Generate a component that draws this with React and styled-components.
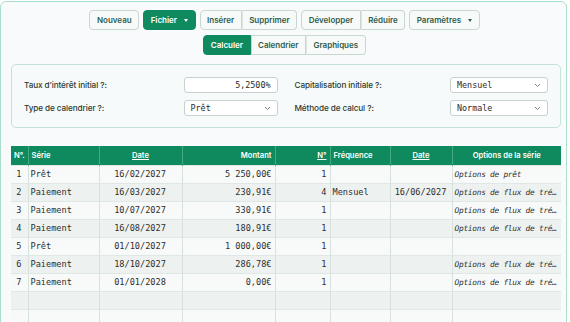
import React from "react";
import styled, { createGlobalStyle, css } from "styled-components";

const GREEN = "#0e8a5e";

const Global = createGlobalStyle`
  html, body { margin: 0; padding: 0; background: #ffffff; }
  body { font-family: Inter, "Noto Sans", sans-serif; }
  * { box-sizing: border-box; }
`;

const Shell = styled.div`
  margin: 1px 3px 0 0;
  height: 330px;
  border: 1px solid #a9e0cb;
  border-radius: 6px;
  background: #f8fafb;
  padding: 8px 7px 0 9px;
  display: flex;
  flex-direction: column;
`;

const Toolbar = styled.div`
  display: flex;
  flex-direction: column;
  align-items: center;
  gap: 5px;
`;

const ToolRow = styled.div`
  display: flex;
  gap: 4px;
  align-items: center;
`;

const Group = styled.div`
  display: flex;
`;

const Btn = styled.button`
  height: 20px;
  padding: 0 6.5px;
  font-family: Inter, "Noto Sans", sans-serif;
  font-size: 8px;
  font-weight: 600;
  color: #2f5d4c;
  background: #f7faf9;
  border: 1px solid #c9d7d1;
  border-radius: 4px;
  display: flex;
  align-items: center;
  gap: 7px;
  cursor: pointer;
  ${(p) =>
    p.$active &&
    css`
      background: ${GREEN};
      border-color: ${GREEN};
      color: #ffffff;
    `}
  ${Group} > & {
    border-radius: 0;
  }
  ${Group} > &:first-child {
    border-radius: 4px 0 0 4px;
  }
  ${Group} > &:last-child {
    border-radius: 0 4px 4px 0;
  }
  ${Group} > & + & {
    border-left: 1px solid #dde6e2;
  }
`;

const Caret = styled.span`
  width: 0;
  height: 0;
  border-left: 2.5px solid transparent;
  border-right: 2.5px solid transparent;
  border-top: 3px solid currentColor;
`;

const Settings = styled.div`
  margin: 9px 0 0 1px;
  width: 550px;
  height: 64px;
  border: 1px solid #c6e2d7;
  border-radius: 5px;
  background: #f7fafa;
  padding: 12px 12px 0 12px;
  display: grid;
  grid-template-columns: 1fr 1fr;
  column-gap: 17px;
  row-gap: 7px;
  align-content: start;
`;

const Field = styled.div`
  display: flex;
  align-items: center;
  justify-content: space-between;
  height: 16px;
`;

const Label = styled.span`
  font-size: 8.2px;
  letter-spacing: -0.1px;
  color: #2b3a34;
  font-weight: 500;
`;

const Control = styled.div`
  width: ${(p) => p.$w}px;
  height: 16px;
  border: 1px solid #c7d2ce;
  border-radius: 3px;
  background: #ffffff;
  display: flex;
  align-items: center;
  justify-content: ${(p) => (p.$right ? "flex-end" : "space-between")};
  padding: 0 6px 0 6px;
  font-family: "DejaVu Sans Mono", "Liberation Mono", monospace;
  font-size: 8.4px;
  color: #2b2b2b;
`;

const Chevron = () => (
  <svg width="7" height="5" viewBox="0 0 7 5" fill="none">
    <path d="M1 1l2.5 2.5L6 1" stroke="#6b7280" strokeWidth="0.9" />
  </svg>
);

const Table = styled.table`
  margin: 18px 0 0 1px;
  width: 550px;
  border-collapse: collapse;
  table-layout: fixed;
  font-family: "DejaVu Sans Mono", "Liberation Mono", monospace;
  font-size: 8.6px;
  color: #2e2e2e;
`;

const Th = styled.th`
  height: 19px;
  background: ${GREEN};
  color: #ffffff;
  font-family: Inter, "Noto Sans", sans-serif;
  font-size: 7.6px;
  font-weight: 600;
  padding: 0 3px;
  text-align: ${(p) => p.$align || "left"};
  text-decoration: ${(p) => (p.$u ? "underline" : "none")};
  border-left: 1px solid #45aa82;
  white-space: nowrap;
  overflow: hidden;
  &:first-child { border-left: none; }
`;

const Tr = styled.tr`
  background: ${(p) => (p.$alt ? "#edf2f1" : "#f8fafa")};
`;

const Td = styled.td`
  height: 18px;
  padding: 0 3px 0 2px;
  border-left: 1px solid #d7e1de;
  border-top: 1px solid #e0e8e5;
  text-align: ${(p) => p.$align || "left"};
  white-space: nowrap;
  overflow: hidden;
  text-overflow: ellipsis;
  &:first-child { border-left: none; }
  ${(p) =>
    p.$i &&
    css`
      font-style: italic;
      font-size: 7.8px;
      letter-spacing: -0.25px;
    `}
`;

const widths = [17, 71, 83, 93, 55, 60, 62, 109];

const rows = [
  ["1", "Prêt", "16/02/2027", "5 250,00€", "1", "", "", "Options de prêt"],
  ["2", "Paiement", "16/03/2027", "230,91€", "4", "Mensuel", "16/06/2027", "Options de flux de trésorerie"],
  ["3", "Paiement", "10/07/2027", "330,91€", "1", "", "", "Options de flux de trésorerie"],
  ["4", "Paiement", "16/08/2027", "180,91€", "1", "", "", "Options de flux de trésorerie"],
  ["5", "Prêt", "01/10/2027", "1 000,00€", "1", "", "", ""],
  ["6", "Paiement", "18/10/2027", "286,78€", "1", "", "", "Options de flux de trésorerie"],
  ["7", "Paiement", "01/01/2028", "0,00€", "1", "", "", "Options de flux de trésorerie"],
  ["", "", "", "", "", "", "", ""],
  ["", "", "", "", "", "", "", ""],
];

const aligns = ["center", "left", "center", "right", "right", "left", "center", "left"];

export default function App() {
  return (
    <>
      <Global />
      <Shell>
        <Toolbar>
          <ToolRow>
            <Btn>Nouveau</Btn>
            <Btn $active>
              Fichier <Caret />
            </Btn>
            <Group>
              <Btn>Insérer</Btn>
              <Btn>Supprimer</Btn>
            </Group>
            <Group>
              <Btn>Développer</Btn>
              <Btn>Réduire</Btn>
            </Group>
            <Btn>
              Paramètres <Caret />
            </Btn>
          </ToolRow>
          <ToolRow>
            <Group>
              <Btn $active>Calculer</Btn>
              <Btn>Calendrier</Btn>
              <Btn>Graphiques</Btn>
            </Group>
          </ToolRow>
        </Toolbar>

        <Settings>
          <Field>
            <Label>Taux d’intérêt initial ?:</Label>
            <Control $w={94} $right>5,2500%</Control>
          </Field>
          <Field>
            <Label>Capitalisation initiale ?:</Label>
            <Control $w={98}>
              Mensuel <Chevron />
            </Control>
          </Field>
          <Field>
            <Label>Type de calendrier ?:</Label>
            <Control $w={94}>
              Prêt <Chevron />
            </Control>
          </Field>
          <Field>
            <Label>Méthode de calcul ?:</Label>
            <Control $w={98}>
              Normale <Chevron />
            </Control>
          </Field>
        </Settings>

        <Table>
          <colgroup>
            {widths.map((w, i) => (
              <col key={i} style={{ width: w }} />
            ))}
          </colgroup>
          <thead>
            <tr>
              <Th>N°.</Th>
              <Th>Série</Th>
              <Th $align="center" $u>Date</Th>
              <Th $align="right">Montant</Th>
              <Th $align="right" $u>N°</Th>
              <Th>Fréquence</Th>
              <Th $align="center" $u>Date</Th>
              <Th $align="center">Options de la série</Th>
            </tr>
          </thead>
          <tbody>
            {rows.map((r, i) => (
              <Tr key={i} $alt={i % 2 === 1}>
                {r.map((c, j) => (
                  <Td key={j} $align={aligns[j]} $i={j === 7}>
                    {c}
                  </Td>
                ))}
              </Tr>
            ))}
          </tbody>
        </Table>
      </Shell>
    </>
  );
}
